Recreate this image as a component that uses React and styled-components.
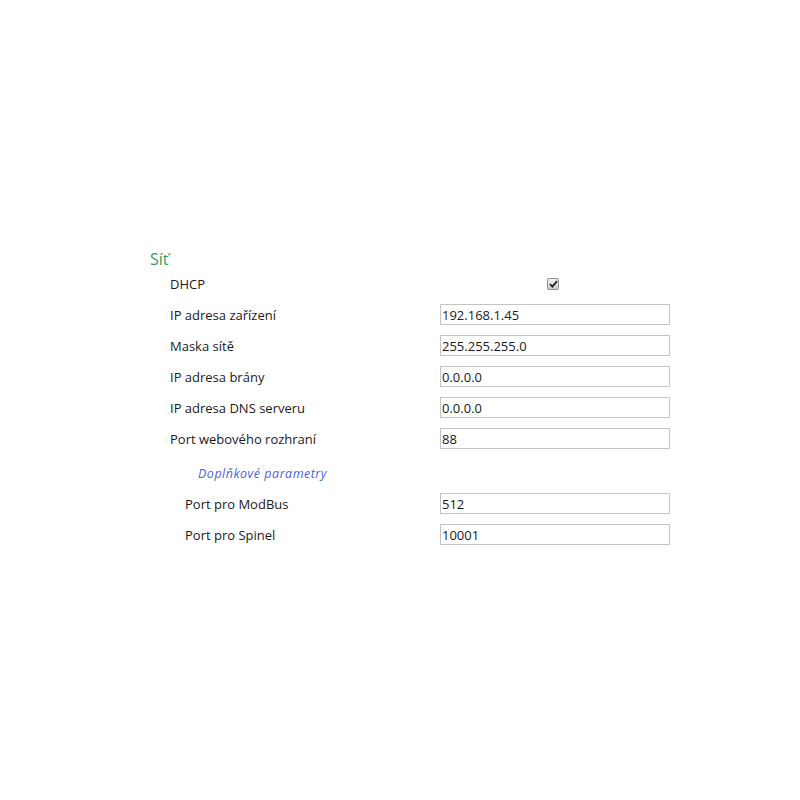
import React from 'react'
import { styled, createGlobalStyle } from 'styled-components'

const GlobalStyle = createGlobalStyle`
  body {
    margin: 0;
    background: #ffffff;
    font-family: "Open Sans", "Noto Sans", sans-serif;
    color: #1a1a1a;
  }
`;

const fields = [
  { label: "IP adresa zařízení", value: "192.168.1.45" },
  { label: "Maska sítě", value: "255.255.255.0" },
  { label: "IP adresa brány", value: "0.0.0.0" },
  { label: "IP adresa DNS serveru", value: "0.0.0.0" },
  { label: "Port webového rozhraní", value: "88" },
];

const extra = [
  { label: "Port pro ModBus", value: "512" },
  { label: "Port pro Spinel", value: "10001" },
];

const Page = styled.div`
  padding: 249px 0 0 150px;
`;

const Title = styled.h2`
  margin: 0;
  font-size: 16px;
  font-weight: 400;
  line-height: 20px;
  color: #2f9e5f;
`;

const Row = styled.div`
  display: flex;
  align-items: center;
  height: ${(p) => (p.$short ? 30 : 31)}px;
  padding-left: ${(p) => (p.$sub ? 35 : 20)}px;
`;

const Label = styled.div`
  width: ${(p) => (p.$sub ? 255 : 270)}px;
  font-size: 13px;
  color: #1a1a1a;
`;

const Input = styled.input`
  box-sizing: border-box;
  width: 230px;
  height: 21px;
  margin: 0;
  padding: 0 0 0 1px;
  border: 1px solid #c4c4c4;
  font-family: "Open Sans", "Noto Sans", sans-serif;
  font-size: 13px;
  color: #1a1a1a;
  outline: none;
`;

const Check = styled.span`
  box-sizing: border-box;
  display: inline-flex;
  align-items: center;
  justify-content: center;
  width: 12px;
  height: 12px;
  margin-left: 107px;
  border: 1px solid #8f8f8f;
  border-radius: 2px;
  background: linear-gradient(#f0f0f0, #cfcfcf);
`;

const Subhead = styled.div`
  padding: 10px 0 4px 48px;
  font-size: 12.5px;
  font-style: italic;
  letter-spacing: 0.5px;
  color: #4b63d9;
  line-height: 20px;
`;

export default function App() {
  return (
    <>
      <GlobalStyle />
      <Page>
        <Title>Síť</Title>
        <Row $short>
          <Label>DHCP</Label>
          <Check>
            <svg width="9" height="8" viewBox="0 0 9 8">
              <path d="M1 4.2 L3.4 6.6 L8 1.2" fill="none" stroke="#222" strokeWidth="1.8" />
            </svg>
          </Check>
        </Row>
        {fields.map((f) => (
          <Row key={f.label}>
            <Label>{f.label}</Label>
            <Input defaultValue={f.value} />
          </Row>
        ))}
        <Subhead>Doplňkové parametry</Subhead>
        {extra.map((f) => (
          <Row key={f.label} $sub>
            <Label $sub>{f.label}</Label>
            <Input defaultValue={f.value} />
          </Row>
        ))}
      </Page>
    </>
  )
}
